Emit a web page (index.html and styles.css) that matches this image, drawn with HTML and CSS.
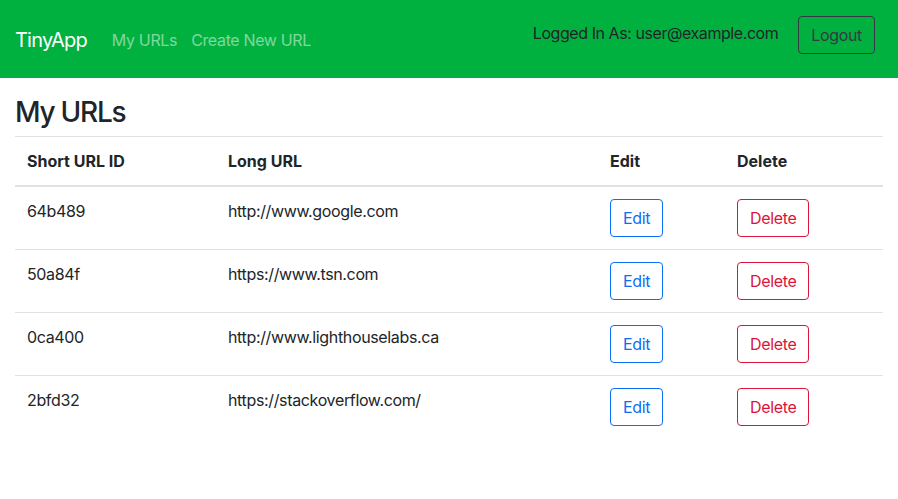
FILE: index.html
```html
<!DOCTYPE html>
<html lang="en">
<head>
<meta charset="utf-8">
<title>TinyApp</title>
<link rel="stylesheet" href="styles.css">
</head>
<body>
<nav class="navbar">
  <a class="brand" href="#">TinyApp</a>
  <div class="nav-links">
    <a class="nav-link" href="#">My URLs</a>
    <a class="nav-link" href="#">Create New URL</a>
  </div>
  <div class="nav-right">
    <span class="logged">Logged In As: user@example.com</span>
    <button class="btn btn-dark">Logout</button>
  </div>
</nav>
<main class="container">
  <h3 class="title">My URLs</h3>
  <table class="table">
    <thead>
      <tr>
        <th class="c1">Short URL ID</th>
        <th class="c2">Long URL</th>
        <th class="c3">Edit</th>
        <th class="c4">Delete</th>
      </tr>
    </thead>
    <tbody>
      <tr>
        <td>64b489</td>
        <td>http://www.google.com</td>
        <td><button class="btn btn-primary">Edit</button></td>
        <td><button class="btn btn-danger">Delete</button></td>
      </tr>
      <tr>
        <td>50a84f</td>
        <td>https://www.tsn.com</td>
        <td><button class="btn btn-primary">Edit</button></td>
        <td><button class="btn btn-danger">Delete</button></td>
      </tr>
      <tr>
        <td>0ca400</td>
        <td>http://www.lighthouselabs.ca</td>
        <td><button class="btn btn-primary">Edit</button></td>
        <td><button class="btn btn-danger">Delete</button></td>
      </tr>
      <tr>
        <td>2bfd32</td>
        <td>https://stackoverflow.com/</td>
        <td><button class="btn btn-primary">Edit</button></td>
        <td><button class="btn btn-danger">Delete</button></td>
      </tr>
    </tbody>
  </table>
</main>
</body>
</html>
```
FILE: styles.css
```css
* { box-sizing: border-box; }
html, body { margin: 0; padding: 0; }
body {
  font-family: Inter, "Liberation Sans", sans-serif;
  font-size: 16px;
  line-height: 1.5;
  letter-spacing: -0.022em;
  color: #212529;
  background: #fff;
}
a { text-decoration: none; }

.navbar {
  display: flex;
  align-items: center;
  height: 78px;
  padding: 0 23px 0 15px;
  background: #00b140;
}
.brand {
  font-size: 20px;
  line-height: 30px;
  letter-spacing: -0.04em;
  color: #fff;
  margin-right: 17px;
  margin-top: 1px;
}
.nav-links { display: flex; }
.nav-link {
  color: rgba(255, 255, 255, 0.5);
  padding: 0 8px;
  line-height: 24px;
  margin-top: 2px;
}
.nav-link + .nav-link { margin-left: -2px; }
.nav-right {
  margin-left: auto;
  align-self: flex-start;
  padding-top: 16px;
  display: flex;
  align-items: flex-start;
}
.logged {
  margin-top: 5px;
  margin-right: 20px;
  line-height: 24px;
  letter-spacing: -0.027em;
}
.btn {
  font-family: inherit;
  font-size: 16px;
  line-height: 24px;
  letter-spacing: -0.022em;
  padding: 6px 12px;
  border: 1px solid;
  border-radius: 4px;
  background: transparent;
  cursor: pointer;
  display: inline-block;
}
.btn-dark { color: #343a40; border-color: #343a40; }
.btn-primary { color: #0a6ff5; border-color: #0a6ff5; }
.btn-danger { color: #dc143c; border-color: #dc143c; }

.container { padding: 16px 15px 0; }
.title {
  margin: 0 0 8px;
  font-size: 28px;
  font-weight: 500;
  line-height: 1.2;
  letter-spacing: -0.045em;
  padding-top: 2px;
  height: 34px;
}
.table {
  width: 100%;
  border-collapse: collapse;
}
.table th, .table td {
  text-align: left;
  vertical-align: top;
  padding: 12px;
  border-top: 1px solid #dee2e6;
}
.table th { font-weight: 700; letter-spacing: 0; }
.table thead th {
  border-bottom: 2px solid #dee2e6;
}
.c1 { width: 201px; }
.c2 { width: 382px; }
.c3 { width: 127px; }
.c4 { width: 158px; }
```
